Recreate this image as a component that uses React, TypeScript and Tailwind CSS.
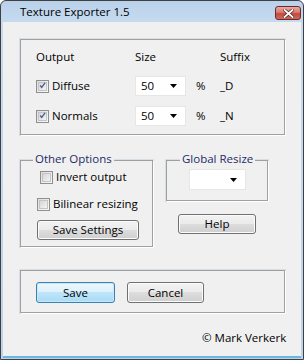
import * as React from "react"

const font = { fontFamily: '"Open Sans", "Liberation Sans", sans-serif' }

function Check({ checked }: { checked?: boolean }) {
  return (
    <span className="flex h-[13px] w-[13px] shrink-0 items-center justify-center border border-[#8f8f8f] bg-gradient-to-br from-[#dcdcdc] to-[#fbfbfb]">
      <span className="flex h-[9px] w-[9px] items-center justify-center border border-[#c4c4c4] bg-gradient-to-br from-[#d6d6d6] to-[#f4f4f4]">
        {checked && (
          <svg width="9" height="9" viewBox="0 0 9 9" className="-mt-[1px]">
            <path d="M1.5 4.5 L3.5 7 L7.8 1.2" fill="none" stroke="#4a5f97" strokeWidth="1.7" />
          </svg>
        )}
      </span>
    </span>
  )
}

function Combo({ value, className }: { value?: string; className: string }) {
  return (
    <div className={`flex items-center justify-between border border-[#e6e6e6] bg-white pl-[5px] pr-[8px] text-[11.5px] text-black ${className}`}>
      <span>{value}</span>
      <svg width="7" height="4" viewBox="0 0 7 4">
        <path d="M0 0 H7 L3.5 4 Z" fill="#000" />
      </svg>
    </div>
  )
}

function Btn({ label, className, primary }: { label: string; className: string; primary?: boolean }) {
  return (
    <div
      className={`flex items-center justify-center rounded-[3px] border text-[11.5px] text-black ${
        primary
          ? "border-[#3c7fb1] bg-[linear-gradient(#ecf7fd_0%,#ddf1fc_48%,#bfe5fa_50%,#a9dbf6_100%)] shadow-[inset_0_0_0_1px_#c5e9fb]"
          : "border-[#707070] bg-[linear-gradient(#f2f2f2_0%,#ebebeb_48%,#dddddd_50%,#cfcfcf_100%)] shadow-[inset_0_0_0_1px_#fcfcfc]"
      } ${className}`}
    >
      {label}
    </div>
  )
}

function Group({ label, className, labelClass, children }: { label?: string; className: string; labelClass?: string; children?: React.ReactNode }) {
  return (
    <div className={`relative shrink-0 border border-[#d5dfe5] ${className}`}>
      <div className="h-full w-full border border-[#a0a0a0] shadow-[1px_1px_0_#fff]">{children}</div>
      {label && (
        <span className={`absolute -top-[9px] bg-[#f0f0f0] px-[2px] text-[11.5px] leading-[16px] text-[#1e2b68] ${labelClass ?? ""}`}>
          {label}
        </span>
      )}
    </div>
  )
}

export default function App() {
  return (
    <div className="h-[362px] w-[306px] overflow-hidden bg-white" style={font}>
      <div className="flex h-[360px] w-[304px] flex-col rounded-t-[6px] border border-[#404040] bg-[linear-gradient(#b9d1ea,#c6dbf0_22px,#bcd3ec)]">
        <div className="flex h-[21px] shrink-0 items-start justify-between pl-[19px] pr-[2px]">
          <span className="mt-[3px] text-[11.5px] leading-[16px] text-black">Texture Exporter 1.5</span>
          <div className="mt-[5px] flex h-[14px] w-[26px] items-center justify-center rounded-[3px] border border-[#6e2a2a] bg-[linear-gradient(#e8aba3_0%,#d8796d_45%,#c54a3c_55%,#c96a5c_100%)]">
            <svg width="11" height="9" viewBox="0 0 11 9">
              <path d="M1.5 1 L9.5 8 M9.5 1 L1.5 8" stroke="#5a1e1e" strokeWidth="3.2" strokeLinecap="square" />
              <path d="M1.5 1 L9.5 8 M9.5 1 L1.5 8" stroke="#fff" strokeWidth="1.8" strokeLinecap="square" />
            </svg>
          </div>
        </div>
        <div className="mx-[2px] mb-[1px] flex flex-1 flex-col border-b-[2px] border-[#68b8df] bg-[#f0f0f0] pl-[16px] text-[11.5px] leading-[16px] text-black">
          <Group className="mt-[16px] h-[98px] w-[267px]">
            <div className="grid grid-cols-[99px_61px_24px_auto] items-center pl-[15px] pt-[9px]">
              <span className="h-[16px]">Output</span>
              <span>Size</span>
              <span />
              <span>Suffix</span>
              <div className="mt-[11px] flex items-center gap-[3px]">
                <Check checked />
                <span>Diffuse</span>
              </div>
              <Combo value="50" className="mt-[11px] h-[20px] w-[51px]" />
              <span className="mt-[11px]">%</span>
              <span className="mt-[11px]">_D</span>
              <div className="mt-[10px] flex items-center gap-[3px]">
                <Check checked />
                <span>Normals</span>
              </div>
              <Combo value="50" className="mt-[10px] h-[20px] w-[51px]" />
              <span className="mt-[10px]">%</span>
              <span className="mt-[10px]">_N</span>
            </div>
          </Group>
          <div className="mt-[23px] flex items-start">
            <Group label="Other Options" labelClass="left-[13px]" className="h-[89px] w-[135px]">
              <div className="flex flex-col items-start">
                <div className="ml-[19px] mt-[8px] flex items-center gap-[3px]">
                  <Check />
                  <span>Invert output</span>
                </div>
                <div className="ml-[16px] mt-[11px] flex items-center gap-[3px]">
                  <Check />
                  <span>Bilinear resizing</span>
                </div>
                <Btn label="Save Settings" className="ml-[16px] mt-[8px] h-[20px] w-[102px]" />
              </div>
            </Group>
            <div className="ml-[11px] flex flex-col items-start">
              <Group label="Global Resize" labelClass="left-[14px]" className="h-[43px] w-[104px]">
                <Combo className="ml-[22px] mt-[8px] h-[21px] w-[57px]" />
              </Group>
              <Btn label="Help" className="ml-[13px] mt-[12px] h-[20px] w-[78px]" />
            </div>
          </div>
          <Group className="mt-[21px] h-[45px] w-[267px]">
            <div className="flex items-center pl-[15px] pt-[11px]">
              <Btn primary label="Save" className="h-[21px] w-[79px]" />
              <Btn label="Cancel" className="ml-[12px] h-[21px] w-[77px]" />
            </div>
          </Group>
          <div className="mt-[16px] pl-[183px]">© Mark Verkerk</div>
        </div>
      </div>
    </div>
  )
}
